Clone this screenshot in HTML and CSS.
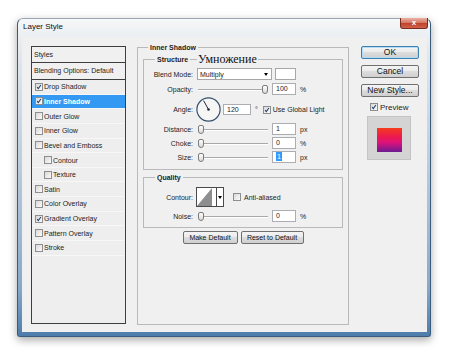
FILE: index.html
```html
<!DOCTYPE html>
<html lang="en">
<head>
  <meta charset="UTF-8">
  <meta name="viewport" content="width=device-width, initial-scale=1.0">
  <title>Layer Style</title>
  <link rel="stylesheet" href="styles.css">
</head>
<body>
  <div class="window">
    <div class="titlebar">
      <span class="title">Layer Style</span>
      <span class="close">x</span>
    </div>
    <div class="client">
      <div class="styles-list">
        <div class="list-head">Styles</div>
        <div class="list-blend">Blending Options: Default</div>
        <div class="item"><span class="chk"><svg viewBox="0 0 8 8"><path d="M1.5 4.2 L3.1 6.1 L6.5 1.3"/></svg></span>Drop Shadow</div>
        <div class="item selected"><span class="chk"><svg viewBox="0 0 8 8"><path d="M1.5 4.2 L3.1 6.1 L6.5 1.3"/></svg></span>Inner Shadow</div>
        <div class="item"><span class="chk"></span>Outer Glow</div>
        <div class="item"><span class="chk"></span>Inner Glow</div>
        <div class="item"><span class="chk"></span>Bevel and Emboss</div>
        <div class="item sub"><span class="chk"></span>Contour</div>
        <div class="item sub"><span class="chk"></span>Texture</div>
        <div class="item"><span class="chk"></span>Satin</div>
        <div class="item"><span class="chk"></span>Color Overlay</div>
        <div class="item"><span class="chk"><svg viewBox="0 0 8 8"><path d="M1.5 4.2 L3.1 6.1 L6.5 1.3"/></svg></span>Gradient Overlay</div>
        <div class="item"><span class="chk"></span>Pattern Overlay</div>
        <div class="item"><span class="chk"></span>Stroke</div>
      </div>

      <fieldset class="group group-main">
        <legend>Inner Shadow</legend>

        <fieldset class="group group-sub">
          <legend>Structure<span class="note">Умножение</span></legend>
          <div class="row">
            <span class="lbl">Blend Mode:</span>
            <div class="select">Multiply<span class="arrow"></span></div>
            <div class="swatch"></div>
          </div>
          <div class="row row-gap3">
            <span class="lbl">Opacity:</span>
            <div class="slider"><span class="thumb thumb-max"></span></div>
            <div class="num">100</div>
            <span class="unit">%</span>
          </div>
          <div class="row row-angle">
            <span class="lbl">Angle:</span>
            <svg class="dial" width="25" height="25" viewBox="0 0 25 25">
              <circle cx="12.5" cy="12.5" r="11.6" fill="#f6f6f6" stroke="#34506c" stroke-width="1.2"/>
              <line x1="12.5" y1="12.5" x2="7.6" y2="3.6" stroke="#1e2a36" stroke-width="1"/>
              <circle cx="12.5" cy="12.5" r="1.3" fill="#1e2a36"/>
            </svg>
            <div class="num num-angle">120</div>
            <span class="unit">°</span>
            <span class="chk chk-global"><svg viewBox="0 0 8 8"><path d="M1.5 4.2 L3.1 6.1 L6.5 1.3"/></svg></span>
            <span class="chk-text">Use Global Light</span>
          </div>
          <div class="row row-gap1">
            <span class="lbl">Distance:</span>
            <div class="slider"><span class="thumb"></span></div>
            <div class="num">1</div>
            <span class="unit">px</span>
          </div>
          <div class="row">
            <span class="lbl">Choke:</span>
            <div class="slider"><span class="thumb"></span></div>
            <div class="num">0</div>
            <span class="unit">%</span>
          </div>
          <div class="row">
            <span class="lbl">Size:</span>
            <div class="slider"><span class="thumb"></span></div>
            <div class="num"><span class="sel">1</span></div>
            <span class="unit">px</span>
          </div>
        </fieldset>

        <fieldset class="group group-sub group-quality">
          <legend>Quality</legend>
          <div class="row row-contour">
            <span class="lbl">Contour:</span>
            <div class="contour">
              <div class="contour-swatch">
                <svg width="19" height="18" viewBox="0 0 19 18"><polygon points="0,18 15,0 15,18" fill="#8e8e8e"/></svg>
              </div>
              <div class="contour-arrow"><span class="arrow"></span></div>
            </div>
            <span class="chk chk-aa"></span>
            <span class="chk-text">Anti-aliased</span>
          </div>
          <div class="row row-gap3">
            <span class="lbl">Noise:</span>
            <div class="slider"><span class="thumb"></span></div>
            <div class="num">0</div>
            <span class="unit">%</span>
          </div>
        </fieldset>

        <div class="btn-row">
          <div class="btn btn-make">Make Default</div>
          <div class="btn btn-reset">Reset to Default</div>
        </div>
      </fieldset>

      <div class="side">
        <div class="btn btn-side btn-ok">OK</div>
        <div class="btn btn-side">Cancel</div>
        <div class="btn btn-side">New Style...</div>
        <div class="preview-check">
          <span class="chk"><svg viewBox="0 0 8 8"><path d="M1.5 4.2 L3.1 6.1 L6.5 1.3"/></svg></span>
          <span class="chk-text">Preview</span>
        </div>
        <div class="preview-box"><div class="preview-fill"></div></div>
      </div>
    </div>
  </div>
</body>
</html>
```

FILE: styles.css
```css
body {
  margin: 0;
  width: 450px;
  height: 356px;
  overflow: hidden;
  background: #fff;
  font-family: "Liberation Sans", Arial, sans-serif;
  font-size: 7px;
  color: #1c1c1c;
}
.window {
  box-sizing: border-box;
  width: 414px;
  height: 319px;
  margin: 18px 0 0 17px;
  padding: 0 3px 4px 4px;
  border: 1px solid #3b5b7c;
  border-top-color: #9ca7b3;
  border-radius: 6px 6px 3px 3px;
  background: linear-gradient(#f6f7f8, #e2e8ee 10%, #bccddd 45%, #86a8c9 85%, #4c7cab);
  box-shadow: 0 3px 9px rgba(0, 0, 0, 0.35);
}
.titlebar {
  display: flex;
  justify-content: space-between;
  height: 18px;
}
.title {
  padding: 3px 0 0 1px;
  font-size: 8px;
  line-height: 10px;
  color: #111;
}
.close {
  box-sizing: border-box;
  width: 28px;
  height: 11px;
  margin: -1px -1px 0 0;
  border: 1px solid #7a2c20;
  border-top: none;
  border-radius: 0 0 3px 3px;
  background: linear-gradient(#eab0a2, #d67a65 45%, #c0432c 55%, #d0634a);
  color: #fff;
  font-weight: bold;
  font-size: 8px;
  line-height: 10px;
  text-align: center;
}
.client {
  box-sizing: border-box;
  display: flex;
  align-items: flex-start;
  height: 295px;
  padding: 9px 8px 0 9px;
  background: #f0f0f0;
}

/* styles list */
.styles-list {
  box-sizing: border-box;
  width: 95px;
  height: 278px;
  border: 1px solid #3e3e3e;
  background: #eeeeee;
}
.list-head, .list-blend {
  box-sizing: border-box;
  height: 16px;
  line-height: 15px;
  padding-left: 2px;
  border-bottom: 1px solid #3e3e3e;
  background: #f0f0f0;
}
.list-blend {
  height: 17px;
  line-height: 16px;
}
.item {
  box-sizing: border-box;
  display: flex;
  align-items: center;
  height: 14.65px;
  padding-left: 3px;
  border-bottom: 1px solid #f7f7f7;
}
.item .chk {
  margin-right: 1px;
}
.item.sub {
  padding-left: 12px;
}
.item.selected {
  background: #3399f3;
  color: #fff;
  font-weight: bold;
}

/* checkbox */
.chk {
  box-sizing: border-box;
  flex: none;
  width: 8px;
  height: 8px;
  border: 1px solid #8c8e8f;
  background: linear-gradient(135deg, #d8d8d8, #fbfbfb);
}
.chk svg {
  display: block;
  width: 6px;
  height: 6px;
}
.chk path {
  fill: none;
  stroke: #21406e;
  stroke-width: 1.4;
}
.chk-text {
  margin-left: 2px;
}

/* group boxes */
.group {
  box-sizing: border-box;
  min-width: 0;
  margin: 0;
  padding: 0;
  border: 1px solid #b9b9b9;
}
.group legend {
  padding: 0 2px;
  font-weight: bold;
  line-height: 9px;
}
.group-main {
  width: 212px;
  height: 282px;
  margin: -3px 0 0 11px;
  padding: 0 5px;
}
.group-main > legend {
  margin-left: 5px;
}
.group-sub {
  width: 200px;
  margin-top: 3px;
  padding: 4px 0 6px;
}
.group-sub > legend {
  position: relative;
  margin-left: 11px;
}
.group-quality {
  padding: 5px 0 5px;
}
.note {
  position: absolute;
  left: 42px;
  top: -2px;
  padding: 0 1px;
  background: #f0f0f0;
  font-family: "Liberation Serif", "Times New Roman", serif;
  font-weight: normal;
  font-size: 12px;
  line-height: 12px;
  color: #111;
  white-space: nowrap;
}

/* rows */
.row {
  display: flex;
  align-items: center;
  height: 12px;
  margin-top: 2px;
}
.row:first-of-type {
  margin-top: 0;
}
.row-gap3 {
  margin-top: 3px;
}
.row-gap1 {
  margin-top: 1px;
}
.row-angle {
  height: 25px;
}
.row-contour {
  height: 20px;
  margin-top: 0;
}
.lbl {
  flex: none;
  width: 49px;
  text-align: right;
}
.select {
  box-sizing: border-box;
  display: flex;
  justify-content: space-between;
  align-items: center;
  width: 75px;
  height: 12px;
  margin-left: 4px;
  padding-left: 2px;
  background: #fff;
  border: 1px solid #a7a7a7;
}
.arrow {
  width: 0;
  height: 0;
  margin-right: 3px;
  border-left: 2.5px solid transparent;
  border-right: 2.5px solid transparent;
  border-top: 3px solid #000;
}
.swatch {
  box-sizing: border-box;
  width: 21px;
  height: 12px;
  margin-left: 3px;
  background: #fff;
  border: 1px solid #a7a7a7;
}
.slider {
  position: relative;
  width: 70px;
  height: 9px;
  margin-left: 5px;
  background: linear-gradient(transparent 4px, #a9a9a9 4px, #a9a9a9 5px, #fff 5px, #fff 6px, transparent 6px);
}
.thumb {
  box-sizing: border-box;
  position: absolute;
  top: 0;
  left: 0;
  width: 6px;
  height: 9px;
  border: 1px solid #7b7b7b;
  border-radius: 2px 2px 3px 3px;
  background: linear-gradient(#fdfdfd, #dadada);
}
.thumb-max {
  left: auto;
  right: 0;
}
.num {
  box-sizing: border-box;
  width: 24px;
  height: 12px;
  margin-left: 4px;
  padding-left: 3px;
  background: #fff;
  border: 1px solid #abadb3;
  line-height: 10px;
}
.num-angle {
  width: 28px;
  height: 11px;
  margin-left: 2px;
  line-height: 9px;
}
.sel {
  display: inline-block;
  height: 9px;
  padding: 0 1px;
  background: #3399ff;
  color: #fff;
  line-height: 9px;
  vertical-align: top;
}
.unit {
  margin-left: 4px;
}
.dial {
  flex: none;
  margin-left: 3px;
}
.chk-global {
  margin-left: 5px;
}
.contour {
  display: flex;
  margin-left: 3px;
}
.contour-swatch {
  box-sizing: border-box;
  width: 21px;
  height: 20px;
  border: 1px solid #4a4a4a;
  background: #fff;
}
.contour-swatch svg {
  display: block;
}
.contour-arrow {
  box-sizing: border-box;
  display: flex;
  justify-content: center;
  align-items: center;
  width: 7px;
  height: 20px;
  border: 1px solid #4a4a4a;
  border-left: none;
  background: #fff;
}
.contour-arrow .arrow {
  margin: 0;
  border-left-width: 2px;
  border-right-width: 2px;
}
.chk-aa {
  margin-left: 9px;
}
.chk-aa + .chk-text {
  margin-left: 3px;
}

/* buttons */
.btn-row {
  display: flex;
  justify-content: center;
  gap: 3px;
  margin-top: 3px;
}
.btn {
  box-sizing: border-box;
  height: 13px;
  border: 1px solid #707070;
  border-radius: 2px;
  background: linear-gradient(#f4f4f4, #ebebeb 45%, #dddddd 50%, #cfcfcf);
  line-height: 11px;
  text-align: center;
  color: #111;
}
.btn-make {
  width: 55px;
}
.btn-reset {
  width: 63px;
}
.side {
  display: flex;
  flex-direction: column;
  width: 58px;
  margin-left: 12px;
}
.btn-side {
  margin-bottom: 6px;
  font-size: 8.5px;
}
.btn-ok {
  border-color: #3c7fb1;
  box-shadow: inset 0 0 0 1px #b6dcf5;
}
.preview-check {
  display: flex;
  align-items: center;
  height: 8px;
  margin-left: 9px;
  font-size: 8px;
}
.preview-box {
  box-sizing: border-box;
  width: 44px;
  height: 44px;
  margin: 5px 0 0 6px;
  padding: 11px 0 0 9px;
  border: 1px solid #c4c4c4;
  background: #d4d4d4;
}
.preview-fill {
  width: 25px;
  height: 24px;
  background: linear-gradient(#f43c1c, #ec1a4c 35%, #de127a 60%, #6c1a92);
}
```
